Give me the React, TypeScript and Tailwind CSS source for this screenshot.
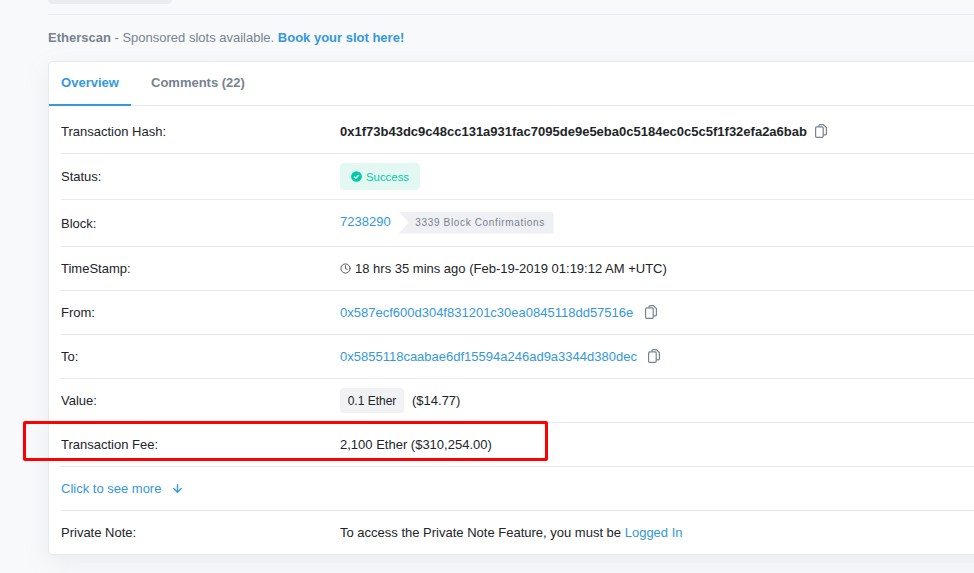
import { ArrowDown, Clock } from "lucide-react";
import { ReactNode } from "react";

const Row = ({ label, height, children }: { label: string; height: string; children: ReactNode }) => (
  <div className={`flex items-center border-b border-[#e7eaf3] ${height}`}>
    <div className="w-[279px] shrink-0 text-[#212529]">{label}</div>
    <div className="flex items-center text-[#212529]">{children}</div>
  </div>
);

const CopyIcon = ({ className }: { className: string }) => (
  <svg width="12" height="14" viewBox="0 0 12 14" fill="none" stroke="#77838f" strokeWidth="1.2" className={className}>
    <path d="M4 2.5V1.6c0-.6.4-1 1-1h3.2l3.2 3v6.2c0 .6-.4 1-1 1H8.4" />
    <rect x="0.6" y="2.9" width="7.6" height="10.4" rx="1" />
  </svg>
);

export default function App() {
  return (
    <div className="h-[573px] w-[974px] overflow-hidden bg-[#f8f9fb] font-['Liberation_Sans',Arial,sans-serif] text-[13px] leading-[18px]">
      <div className="relative h-[573px] pl-12">
        <div className="h-[15px] w-[926px] border-b border-[#e7eaf3]">
          <div className="h-[4px] w-[124px] rounded-b-lg bg-[#eaecef]" />
        </div>
        <div className="flex h-[46px] items-center text-[#77838f]">
          <span className="font-bold">Etherscan</span>
          <span className="whitespace-pre"> - Sponsored slots available. </span>
          <a className="font-bold text-[#3498db]">Book your slot here!</a>
        </div>
        <div className="h-[494px] w-[960px] rounded-[5px] border border-[#e7eaf3] bg-white shadow-[0_8px_24px_rgba(140,152,164,0.13)]">
          <div className="flex h-[44px] border-b border-[#e7eaf3]">
            <div className="flex h-[44px] w-[82px] items-center justify-center border-b-2 border-[#3498db] pb-[1px] font-bold text-[#3498db]">
              Overview
            </div>
            <div className="flex h-[43px] items-center pb-[2px] pl-5 font-bold text-[#77838f]">Comments (22)</div>
          </div>
          <div className="pl-3">
            <Row label="Transaction Hash:" height="h-[48px] pt-[4px]">
              <span className="font-bold">0x1f73b43dc9c48cc131a931fac7095de9e5eba0c5184ec0c5c5f1f32efa2a6bab</span>
              <CopyIcon className="ml-[8px] -mt-[1px]" />
            </Row>
            <Row label="Status:" height="h-[46px]">
              <span className="flex h-[27px] w-[80px] items-center justify-center gap-[4px] rounded-[4px] bg-[#e3f8f3] text-[11.4px] text-[#00c9a7]">
                <svg width="11" height="11" viewBox="0 0 12 12">
                  <circle cx="6" cy="6" r="5.8" fill="#00c9a7" />
                  <path d="M3.4 6.2 5.2 8l3.4-3.6" fill="none" stroke="#e3f8f3" strokeWidth="1.5" />
                </svg>
                Success
              </span>
            </Row>
            <Row label="Block:" height="h-[47px] pt-[1px]">
              <a className="-mt-[4px] text-[#3498db]">7238290</a>
              <span className="ml-[8px] -mt-[2px] flex h-[22px] w-[155px] items-center justify-center rounded-r-[3px] bg-[#eff0f3] pl-[8px] text-[10px] tracking-[0.65px] text-[#77838f] [clip-path:polygon(0_0,100%_0,100%_100%,0_100%,10px_50%)]">
                3339 Block Confirmations
              </span>
            </Row>
            <Row label="TimeStamp:" height="h-[44px]">
              <Clock size={11} strokeWidth={1.6} className="mr-[4px]" />
              18 hrs 35 mins ago (Feb-19-2019 01:19:12 AM +UTC)
            </Row>
            <Row label="From:" height="h-[44px]">
              <a className="text-[#3498db]">0x587ecf600d304f831201c30ea0845118dd57516e</a>
              <CopyIcon className="ml-[12px] -mt-[1px]" />
            </Row>
            <Row label="To:" height="h-[44px]">
              <a className="text-[#3498db]">0x5855118caabae6df15594a246ad9a3344d380dec</a>
              <CopyIcon className="ml-[11px] -mt-[1px]" />
            </Row>
            <Row label="Value:" height="h-[44px]">
              <span className="flex h-[25px] w-[64px] items-center justify-center rounded-[3px] bg-[#f1f2f4] text-[12px]">0.1 Ether</span>
              <span className="ml-2">($14.77)</span>
            </Row>
            <Row label="Transaction Fee:" height="h-[44px]">
              2,100 Ether ($310,254.00)
            </Row>
            <div className="flex h-[44px] items-center gap-[10px] border-b border-[#e7eaf3] text-[#3498db]">
              Click to see more
              <ArrowDown size={13} strokeWidth={2.5} />
            </div>
            <div className="flex h-[44px] items-center">
              <div className="w-[279px] shrink-0 text-[#212529]">Private Note:</div>
              <div className="whitespace-pre text-[#212529]">
                To access the Private Note Feature, you must be <a className="text-[#3498db]">Logged In</a>
              </div>
            </div>
          </div>
        </div>
        <div className="absolute left-[23px] top-[421px] h-[40px] w-[525px] rounded-[2px] border-[3px] border-[#ff0000]" />
      </div>
    </div>
  );
}
